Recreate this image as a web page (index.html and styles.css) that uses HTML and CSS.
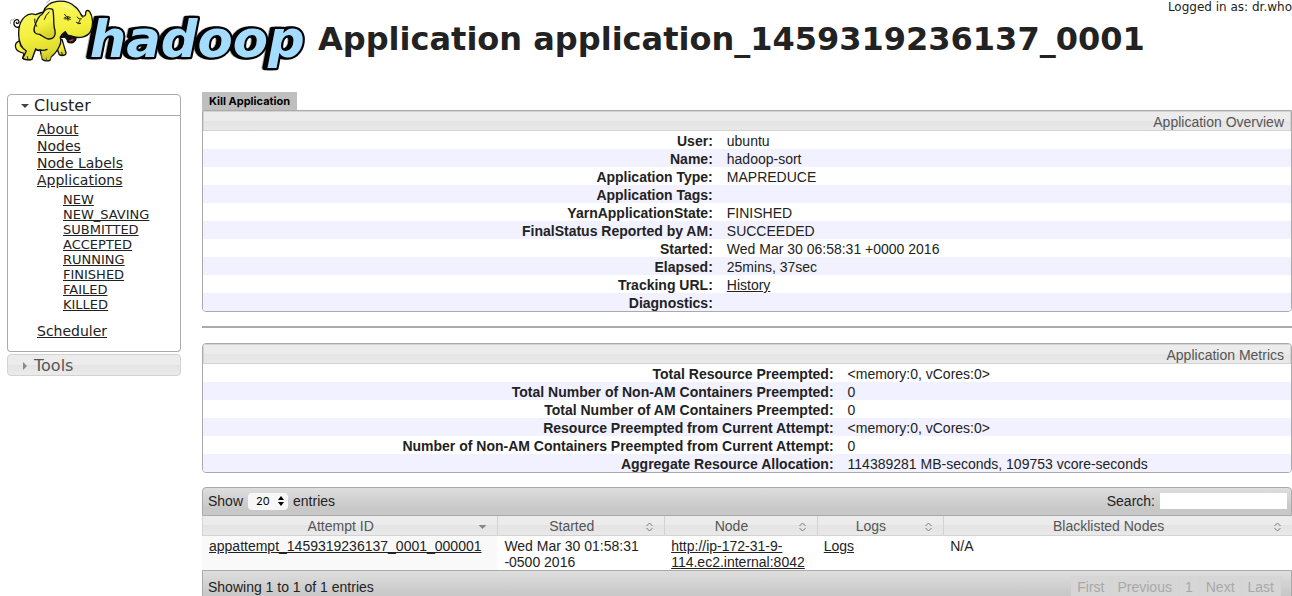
FILE: index.html
```html
<!DOCTYPE html>
<html lang="en">
<head>
<meta charset="utf-8">
<title>Application application_1459319236137_0001</title>
<link rel="stylesheet" href="styles.css">
</head>
<body>
<header class="page-header">
  <svg class="logo" viewBox="0 0 930 225" role="img" aria-label="hadoop">
    <defs>
      <linearGradient id="hide" x1="0" y1="0" x2="0.3" y2="1">
        <stop offset="0" stop-color="#fdfb6a"/>
        <stop offset="0.6" stop-color="#f3f03c"/>
        <stop offset="1" stop-color="#d5d22c"/>
      </linearGradient>
    </defs>
    <text class="wordmark" x="269" y="170">hadoop</text>
    <g fill="url(#hide)" stroke="#111" stroke-width="4" stroke-linejoin="round" stroke-linecap="round">
      <path d="M57 81C48 84 40 76 42 67C44 58 55 56 57 64C58 70 50 73 49 67" fill="none"/>
      <path d="M165 130L178 164Q186 169 196 164Q200 160 196 152L186 118Z"/>
      <path d="M62 122C48 125 44 133 47 143C49 153 59 157 72 160L68 175Q80 181 95 178L105 150Z"/>
      <path d="M107 44C82 34 61 58 57 85C53 118 62 142 79 153L68 175Q80 182 96 178L107 147Q113 152 120 150L127 178Q137 185 150 181L153 171Q170 158 178 139Q185 125 181 113C195 111 207 103 218 109C237 116 260 112 271 96C282 75 278 48 269 35C263 28 256 32 257 41Q257 50 247 48C237 37 239 29 225 20C210 5 191 2 171 4C149 7 135 20 130 36Q118 39 107 44Z"/>
      <path d="M158 28C145 22 133 29 127 42C113 50 108 65 103 83C99 98 108 103 119 103C129 109 137 118 148 117C161 116 168 107 165 91C158 74 164 47 158 28Z"/>
      <path d="M107 147Q113 154 120 150Q132 153 141 148" fill="none"/>
      <path d="M181 111Q186 102 196 95C202 108 214 112 228 113C229 124 215 133 203 126Q202 117 195 111Z" fill="#111"/>
      <path d="M206 122Q214 116 222 118Q216 127 206 122Z" fill="#c44" stroke="none"/>
      <path d="M192 54Q202 45 211 52M195 57Q204 52 211 58M203 52L204 61M198 48L194 43M231 51Q237 60 244 57M242 44L248 52M229 67Q235 74 242 70M240 60L235 70M110 79Q102 68 104 57M60 128Q58 139 68 145M147 36Q137 45 133 58M82 170L84 177M139 174L140 181M185 157L187 165" fill="none" stroke-width="3"/>
      <path d="M31 71Q29 64 35 58M38 62Q39 57 44 54M140 9Q142 3 149 1M146 13Q148 8 153 6" fill="none" stroke="#888" stroke-width="2"/>
      <path d="M117 161Q137 171 160 150L151 178Q140 183 128 177Z" fill="#c9c629" opacity="0.5" stroke="none"/>
      <path d="M180 17Q205 11 220 29Q202 21 180 17Z" fill="#fff" opacity="0.5" stroke="none"/>
    </g>
  </svg>
  <h1 class="page-title">Application application_1459319236137_0001</h1>
  <div class="user">Logged in as: dr.who</div>
</header>
<div class="layout">
  <nav class="sidebar">
    <h3 class="nav-head nav-open"><svg class="caret" viewBox="0 0 8 8"><path d="M0 2h8L4 6z"/></svg>Cluster</h3>
    <div class="nav-body">
      <ul class="nav-list">
        <li><a href="#">About</a></li>
        <li><a href="#">Nodes</a></li>
        <li><a href="#">Node Labels</a></li>
        <li><a href="#">Applications</a>
          <ul class="nav-sublist">
            <li><a href="#">NEW</a></li>
            <li><a href="#">NEW_SAVING</a></li>
            <li><a href="#">SUBMITTED</a></li>
            <li><a href="#">ACCEPTED</a></li>
            <li><a href="#">RUNNING</a></li>
            <li><a href="#">FINISHED</a></li>
            <li><a href="#">FAILED</a></li>
            <li><a href="#">KILLED</a></li>
          </ul>
        </li>
        <li><a href="#">Scheduler</a></li>
      </ul>
    </div>
    <h3 class="nav-head nav-closed"><svg class="caret" viewBox="0 0 8 8"><path d="M2 0v8L6 4z"/></svg>Tools</h3>
  </nav>
  <main class="content">
    <button class="kill" type="button">Kill Application</button>
    <section class="info overview">
      <h2 class="info-head">Application Overview</h2>
      <table class="info-table">
        <tr><th scope="row">User:</th><td>ubuntu</td></tr>
        <tr><th scope="row">Name:</th><td>hadoop-sort</td></tr>
        <tr><th scope="row">Application Type:</th><td>MAPREDUCE</td></tr>
        <tr><th scope="row">Application Tags:</th><td></td></tr>
        <tr><th scope="row">YarnApplicationState:</th><td>FINISHED</td></tr>
        <tr><th scope="row">FinalStatus Reported by AM:</th><td>SUCCEEDED</td></tr>
        <tr><th scope="row">Started:</th><td>Wed Mar 30 06:58:31 +0000 2016</td></tr>
        <tr><th scope="row">Elapsed:</th><td>25mins, 37sec</td></tr>
        <tr><th scope="row">Tracking URL:</th><td><a href="#">History</a></td></tr>
        <tr><th scope="row">Diagnostics:</th><td></td></tr>
      </table>
    </section>
    <hr class="rule">
    <section class="info metrics">
      <h2 class="info-head">Application Metrics</h2>
      <table class="info-table">
        <tr><th scope="row">Total Resource Preempted:</th><td>&lt;memory:0, vCores:0&gt;</td></tr>
        <tr><th scope="row">Total Number of Non-AM Containers Preempted:</th><td>0</td></tr>
        <tr><th scope="row">Total Number of AM Containers Preempted:</th><td>0</td></tr>
        <tr><th scope="row">Resource Preempted from Current Attempt:</th><td>&lt;memory:0, vCores:0&gt;</td></tr>
        <tr><th scope="row">Number of Non-AM Containers Preempted from Current Attempt:</th><td>0</td></tr>
        <tr><th scope="row">Aggregate Resource Allocation:</th><td>114389281 MB-seconds, 109753 vcore-seconds</td></tr>
      </table>
    </section>
    <section class="attempts">
      <div class="toolbar toolbar-top">
        <label class="length">Show
          <span class="select-wrap"><select><option>20</option><option>50</option></select><svg class="updown" viewBox="0 0 6 10"><path d="M0 4h6L3 0zM0 6h6L3 10z"/></svg></span>
          entries</label>
        <label class="search">Search: <input type="text"></label>
      </div>
      <table class="grid">
        <colgroup><col class="c-id"><col class="c-started"><col class="c-node"><col class="c-logs"><col></colgroup>
        <thead>
          <tr>
            <th scope="col"><div class="th"><span>Attempt ID</span><svg class="sort" viewBox="0 0 8 10"><path class="solid" d="M0 3h8L4 7z"/></svg></div></th>
            <th scope="col"><div class="th"><span>Started</span><svg class="sort" viewBox="0 0 8 10"><path d="M1 4L4 1L7 4M1 6L4 9L7 6"/></svg></div></th>
            <th scope="col"><div class="th"><span>Node</span><svg class="sort" viewBox="0 0 8 10"><path d="M1 4L4 1L7 4M1 6L4 9L7 6"/></svg></div></th>
            <th scope="col"><div class="th"><span>Logs</span><svg class="sort" viewBox="0 0 8 10"><path d="M1 4L4 1L7 4M1 6L4 9L7 6"/></svg></div></th>
            <th scope="col"><div class="th"><span>Blacklisted Nodes</span><svg class="sort" viewBox="0 0 8 10"><path d="M1 4L4 1L7 4M1 6L4 9L7 6"/></svg></div></th>
          </tr>
        </thead>
        <tbody>
          <tr>
            <td class="sorted"><a href="#">appattempt_1459319236137_0001_000001</a></td>
            <td>Wed Mar 30 01:58:31 -0500 2016</td>
            <td><a href="#">http://ip-172-31-9-114.ec2.internal:8042</a></td>
            <td><a href="#">Logs</a></td>
            <td>N/A</td>
          </tr>
        </tbody>
      </table>
      <div class="toolbar toolbar-bottom">
        <span>Showing 1 to 1 of 1 entries</span>
        <div class="pager">
          <button type="button" disabled>First</button>
          <button type="button" disabled>Previous</button>
          <button type="button" disabled>1</button>
          <button type="button" disabled>Next</button>
          <button type="button" disabled>Last</button>
        </div>
      </div>
    </section>
  </main>
</div>
</body>
</html>
```
FILE: styles.css
```css
* { box-sizing: border-box; }

body {
  margin: 0;
  height: 100vh;
  overflow: hidden;
  background: #fff;
  color: #222;
  font: 14px/18px "Liberation Sans", Arial, sans-serif;
}

a { color: #222; text-decoration: underline; }

.page-header {
  display: flex;
  align-items: flex-start;
  font-family: "DejaVu Sans", Verdana, sans-serif;
}

.logo { flex: none; width: 310px; height: 75px; }
.wordmark {
  font: italic bold 154px "DejaVu Sans", Verdana, sans-serif;
  fill: #a3dcff;
  stroke: #000;
  stroke-width: 13px;
  stroke-linejoin: round;
  paint-order: stroke;
  filter: drop-shadow(-10px 0 0 #000);
}

.page-title {
  margin: 20px 0 0 8px;
  font-size: 32px;
  line-height: 38px;
  font-weight: bold;
  white-space: nowrap;
}

.user {
  margin-left: auto;
  font-size: 12px;
  line-height: 14px;
  white-space: nowrap;
}

.layout {
  display: flex;
  align-items: flex-start;
  gap: 21px;
  padding: 17px 0 0 7px;
}

.sidebar {
  flex: none;
  width: 174px;
  padding-top: 2px;
  font-family: "DejaVu Sans", Verdana, sans-serif;
}

.nav-head {
  display: flex;
  align-items: center;
  gap: 5px;
  height: 22px;
  margin: 0;
  padding: 2px 0 0 13px;
  font-size: 16px;
  font-weight: normal;
  border: 1px solid #aaa;
}

.nav-open { border-radius: 4px 4px 0 0; }
.nav-closed {
  margin-top: 2px;
  border-color: #d3d3d3;
  border-radius: 4px;
  background: linear-gradient(#ececec 50%, #e4e4e4 50%, #ebebeb);
  color: #555;
}
.caret { width: 8px; height: 8px; fill: #444; }
.nav-closed .caret { fill: #888; }

.nav-body {
  padding: 5px 0 11px 29px;
  border: 1px solid #aaa;
  border-top: 0;
  border-radius: 0 0 4px 4px;
}

.nav-list, .nav-sublist { margin: 0; padding: 0; list-style: none; }
.nav-list { line-height: 17px; }
.nav-sublist {
  padding: 3px 0 11px 26px;
  font-size: 13px;
  line-height: 15px;
}

.content { flex: 1; min-width: 0; }

.kill {
  display: block;
  height: 18px;
  padding: 0 7px;
  border: 0;
  background: #bfbfbf;
  color: #000;
  font: bold 11px/18px Inter, sans-serif;
}

.info { border: 1px solid #aaa; border-radius: 0 0 4px 4px; overflow: hidden; }
.metrics { border-radius: 4px; }
.info-head {
  height: 20px;
  margin: 0;
  padding: 0 6px 0 0;
  border: 1px solid #d3d3d3;
  background: linear-gradient(#ececec 50%, #e4e4e4 50%, #e9e9e9);
  color: #555;
  font-size: 14px;
  line-height: 20px;
  font-weight: normal;
  text-align: right;
}

.info-table { width: 100%; border-collapse: collapse; table-layout: fixed; }
.info-table th, .info-table td { height: 18px; padding: 2px 7px 0; line-height: 16px; }
.info-table th { width: 47.5%; text-align: right; }
.metrics .info-table th { width: 58.6%; }
.info-table tr:nth-child(even) { background: #f1f1ff; }

.rule { height: 2px; margin: 14px 0 15px; border: 0; background: #aaa; }

.attempts { margin-top: 14px; }

.toolbar {
  display: flex;
  justify-content: space-between;
  border: 1px solid #aaa;
  background: linear-gradient(#dedede, #c8c8c8 75%);
}
.toolbar-top {
  align-items: center;
  height: 29px;
  padding: 0 4px 1px 5px;
  border-radius: 4px 4px 0 0;
}
.toolbar-bottom {
  align-items: flex-start;
  height: 33px;
  padding: 5px 10px 5px 5px;
  line-height: 22px;
  border-radius: 0 0 4px 4px;
}

.length, .search { display: flex; align-items: center; gap: 5px; }

.select-wrap { display: inline-flex; align-items: center; position: relative; }
.select-wrap select {
  width: 40px;
  height: 17px;
  padding: 0 8px;
  border: 0;
  border-radius: 4px;
  appearance: none;
  background: #f7f7f7;
  color: #000;
  font: 11px/17px Inter, sans-serif;
}
.updown { position: absolute; right: 4px; width: 6px; height: 10px; fill: #000; pointer-events: none; }

.search input {
  width: 127px;
  height: 16px;
  padding: 0 2px;
  border: 0;
  background: #fff;
}

.grid { width: 100%; border-collapse: separate; border-spacing: 0; table-layout: fixed; }
.c-id { width: 27.1%; }
.c-started { width: 15.3%; }
.c-node { width: 14%; }
.c-logs { width: 11.6%; }
.grid th {
  height: 20px;
  padding: 2px 10px 0 0;
  border: solid #d3d3d3;
  border-width: 0 0 1px 1px;
  background: linear-gradient(#ececec 50%, #e4e4e4 50%, #e9e9e9);
  color: #555;
  font-weight: normal;
}
.th { display: flex; align-items: center; line-height: 17px; }
.th span { flex: 1; }
.sort { width: 9px; height: 10px; fill: none; stroke: #777; }
.solid { fill: #888; stroke: none; }
.grid td {
  height: 34px;
  padding: 2px 7px 0;
  line-height: 16px;
  vertical-align: top;
}
.grid .sorted { background: #f9f9f9; }

.pager { display: flex; }
.pager button {
  height: 22px;
  padding: 0 6px;
  border: 0;
  border-right: 1px solid #d4d4d4;
  background: #d6d6d6;
  color: #a8a8a8;
  font: 14px/22px "Liberation Sans", Arial, sans-serif;
}
```
